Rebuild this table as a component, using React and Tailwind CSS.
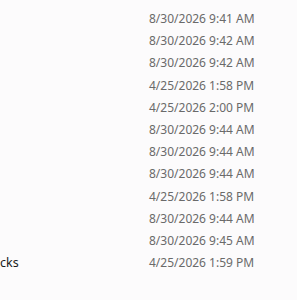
const rows = [
  { name: '', date: '8/30/2026 9:41 AM' },
  { name: '', date: '8/30/2026 9:42 AM' },
  { name: '', date: '8/30/2026 9:42 AM' },
  { name: '', date: '4/25/2026 1:58 PM' },
  { name: '', date: '4/25/2026 2:00 PM' },
  { name: '', date: '8/30/2026 9:44 AM' },
  { name: '', date: '8/30/2026 9:44 AM' },
  { name: '', date: '8/30/2026 9:44 AM' },
  { name: '', date: '4/25/2026 1:58 PM' },
  { name: '', date: '8/30/2026 9:44 AM' },
  { name: '', date: '8/30/2026 9:45 AM' },
  { name: 'cks', date: '4/25/2026 1:59 PM' },
]

export default function App() {
  return (
    <div className="w-[300px] h-[300px] bg-[#fcfbfc] flex overflow-hidden font-['Noto_Sans',sans-serif] text-[12px]">
      <div className="flex-1 flex flex-col pt-[8px]">
        {rows.map((r, i) => (
          <div key={i} className="h-[22.2px] flex items-center">
            <div className="w-[149px] text-[#1a1a1a] text-[12.5px] whitespace-nowrap overflow-hidden">{r.name}</div>
            <div className="text-[#6a6a6a] whitespace-nowrap">{r.date}</div>
          </div>
        ))}
      </div>
      <div className="w-[3px] bg-white" />
    </div>
  )
}
